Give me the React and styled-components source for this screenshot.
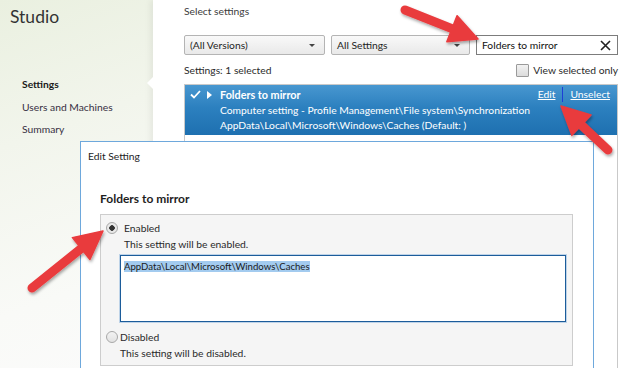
import styled, { createGlobalStyle } from "styled-components";

const GlobalStyle = createGlobalStyle`
  html, body {
    margin: 0;
    padding: 0;
    background: #ffffff;
  }
  body {
    font-family: Lato, "Noto Sans", sans-serif;
    font-size: 10.3px;
    color: #2a2a2a;
  }
`;

const arrows = [
  { from: [405, 10], to: [478, 39] },
  { from: [608, 150], to: [561, 106] },
  { from: [32, 288], to: [103, 231] },
];

function Arrow({ from, to }) {
  const dx = to[0] - from[0];
  const dy = to[1] - from[1];
  const len = Math.hypot(dx, dy);
  const ux = dx / len;
  const uy = dy / len;
  const head = 28;
  const half = 14;
  const bx = to[0] - ux * head;
  const by = to[1] - uy * head;
  const nx = -uy;
  const ny = ux;
  const pts = [
    [to[0], to[1]],
    [bx + nx * half, by + ny * half],
    [bx - nx * half, by - ny * half],
  ]
    .map((p) => p.join(","))
    .join(" ");
  return (
    <g>
      <line
        x1={from[0]}
        y1={from[1]}
        x2={bx + ux * 4}
        y2={by + uy * 4}
        stroke="#e93b3e"
        strokeWidth="9"
        strokeLinecap="round"
      />
      <polygon points={pts} fill="#e93b3e" strokeLinejoin="round" stroke="#e93b3e" strokeWidth="1.5" />
    </g>
  );
}

function App() {
  return (
    <>
      <GlobalStyle />
      <Page>
        <Sidebar>
          <Brand>Studio</Brand>
          <Nav>
            <NavItem $active>Settings</NavItem>
            <NavItem>Users and Machines</NavItem>
            <NavItem>Summary</NavItem>
          </Nav>
        </Sidebar>

        <Main>
          <Heading>Select settings</Heading>
          <FilterRow>
            <Select $w={141}>
              (All Versions)
              <Caret />
            </Select>
            <Select $w={139}>
              All Settings
              <Caret />
            </Select>
            <Search>
              <span>Folders to mirror</span>
              <svg width="11" height="11" viewBox="0 0 11 11">
                <path d="M1 1 L10 10 M10 1 L1 10" stroke="#222" strokeWidth="1.6" />
              </svg>
            </Search>
          </FilterRow>
          <StatusRow>
            <span>Settings: 1 selected</span>
            <CheckLabel>
              <CheckBox />
              View selected only
            </CheckLabel>
          </StatusRow>
          <List>
            <SelectedRow>
              <RowIcons>
                <svg width="11" height="9" viewBox="0 0 11 9">
                  <path d="M1 4.5 L4 7.5 L10 1" stroke="#fff" strokeWidth="1.8" fill="none" />
                </svg>
                <svg width="5" height="8" viewBox="0 0 5 8">
                  <path d="M0 0 L5 4 L0 8 Z" fill="#fff" />
                </svg>
              </RowIcons>
              <RowText>
                <RowHead>
                  <RowTitle>Folders to mirror</RowTitle>
                  <RowActions>
                    <ActionLink>Edit</ActionLink>
                    <Separator />
                    <ActionLink>Unselect</ActionLink>
                  </RowActions>
                </RowHead>
                <div>Computer setting - Profile Management\File system\Synchronization</div>
                <div>AppData\Local\Microsoft\Windows\Caches (Default: )</div>
              </RowText>
            </SelectedRow>
          </List>
        </Main>

        <Dialog>
          <DialogTitle>Edit Setting</DialogTitle>
          <DialogBody>
            <SettingName>Folders to mirror</SettingName>
            <Group>
              <Option>
                <Radio $checked />
                <span>Enabled</span>
              </Option>
              <OptionDesc>This setting will be enabled.</OptionDesc>
              <ValueBox>
                <Selected>AppData\Local\Microsoft\Windows\Caches</Selected>
              </ValueBox>
              <Option $tight $spaced>
                <Radio />
                <span>Disabled</span>
              </Option>
              <OptionDesc $tight>This setting will be disabled.</OptionDesc>
            </Group>
          </DialogBody>
        </Dialog>

        <ArrowLayer viewBox="0 0 622 368">
          <defs>
            <filter id="shadow" x="-20%" y="-20%" width="140%" height="140%">
              <feDropShadow dx="1" dy="2" stdDeviation="1.5" floodColor="#000" floodOpacity="0.35" />
            </filter>
          </defs>
          <g filter="url(#shadow)">
            {arrows.map((a, i) => (
              <Arrow key={i} from={a.from} to={a.to} />
            ))}
          </g>
        </ArrowLayer>
      </Page>
    </>
  );
}

export default App;

const Page = styled.div`
  position: relative;
  width: 622px;
  height: 368px;
  overflow: hidden;
  display: flex;
`;

const Sidebar = styled.div`
  width: 153px;
  flex-shrink: 0;
  padding: 4px 0 0 10px;
  box-sizing: border-box;
  background: linear-gradient(160deg, #eaf0e0 0%, #f2f5ec 35%, #f9faf7 75%, #fbfbfb 100%);
`;

const Brand = styled.div`
  font-size: 17.5px;
  line-height: 26px;
  color: #333;
`;

const Nav = styled.div`
  margin-top: 47px;
  padding-left: 12px;
  display: flex;
  flex-direction: column;
  gap: 8.5px;
`;

const NavItem = styled.div`
  line-height: 14px;
  color: ${(p) => (p.$active ? "#1a1a1a" : "#372f42")};
  font-weight: ${(p) => (p.$active ? 700 : 400)};
`;

const Main = styled.div`
  position: relative;
  flex: 1;
  display: flex;
  flex-direction: column;
  padding: 4px 4px 0 31px;
  background: #fff;
  box-shadow: -3px 0 6px rgba(0, 0, 0, 0.06);

  &::before {
    content: "";
    position: absolute;
    left: -6px;
    top: 77px;
    border-style: solid;
    border-width: 6px 6px 6px 0;
    border-color: transparent #fff transparent transparent;
  }
`;

const Heading = styled.div`
  line-height: 14px;
  color: #3c3c3c;
`;

const FilterRow = styled.div`
  margin-top: 17px;
  display: flex;
  gap: 6px;
  height: 20px;
`;

const Select = styled.div`
  width: ${(p) => p.$w}px;
  box-sizing: border-box;
  display: flex;
  align-items: center;
  justify-content: space-between;
  padding: 0 9px 0 5px;
  border: 1px solid #b4b4b4;
  border-radius: 2px;
  background: linear-gradient(#f9f9f9, #e9e9e9);
  color: #1e1e1e;
`;

const Caret = styled.span`
  width: 0;
  height: 0;
  border-left: 3px solid transparent;
  border-right: 3px solid transparent;
  border-top: 3px solid #444;
`;

const Search = styled.div`
  flex: 1;
  display: flex;
  align-items: center;
  justify-content: space-between;
  padding: 0 6px 0 5px;
  border: 1px solid #7c7c7c;
  background: #fff;
  color: #111;
`;

const StatusRow = styled.div`
  margin-top: 8px;
  display: flex;
  justify-content: space-between;
  align-items: center;
  line-height: 14px;
`;

const CheckLabel = styled.label`
  display: flex;
  align-items: center;
  gap: 4px;
`;

const CheckBox = styled.span`
  width: 11px;
  height: 11px;
  border: 1px solid #9a9a9a;
  border-radius: 1px;
  background: linear-gradient(#f2f2f2, #dcdcdc);
`;

const List = styled.div`
  margin-top: 7px;
  flex: 1;
  border: 1px solid #c9c9c9;
  border-bottom: none;
  background: #fff;
`;

const SelectedRow = styled.div`
  display: flex;
  align-items: flex-start;
  padding: 2px 7px 1px 5px;
  background: linear-gradient(#4897d0, #2c80bf 45%, #1e70b0);
  color: #fff;
  line-height: 15.5px;
`;

const RowIcons = styled.div`
  display: flex;
  align-items: center;
  gap: 6px;
  width: 30px;
  height: 15px;
`;

const RowText = styled.div`
  flex: 1;
  white-space: nowrap;
`;

const RowHead = styled.div`
  display: flex;
  align-items: center;
  justify-content: space-between;
`;

const RowTitle = styled.div`
  font-size: 10.8px;
  font-weight: 700;
`;

const RowActions = styled.div`
  display: flex;
  align-items: center;
  gap: 7px;
`;

const ActionLink = styled.a`
  color: #fff;
  text-decoration: underline;
`;

const Separator = styled.span`
  width: 1px;
  height: 15px;
  background: #1d3fd6;
`;

const Dialog = styled.div`
  position: absolute;
  left: 80px;
  top: 141px;
  width: 514px;
  height: 260px;
  box-sizing: border-box;
  border: 1px solid #6ea8dc;
  background: #fff;
`;

const DialogTitle = styled.div`
  padding: 7px 7px 0;
  line-height: 14px;
  color: #1e1e1e;
`;

const DialogBody = styled.div`
  padding: 28px 20px 0 19px;
`;

const SettingName = styled.div`
  font-size: 12px;
  font-weight: 700;
  line-height: 16px;
  color: #1e1e1e;
`;

const Group = styled.div`
  margin-top: 7px;
  padding: 5px 3px 3px 5px;
  border: 1px solid #cdcdcd;
  background: #f5f5f5;
`;

const Option = styled.div`
  display: flex;
  align-items: center;
  gap: ${(p) => (p.$tight ? 2 : 6)}px;
  line-height: 16px;
  margin-top: ${(p) => (p.$spaced ? 7 : 0)}px;
`;

const Radio = styled.span`
  width: 12px;
  height: 12px;
  box-sizing: border-box;
  border-radius: 50%;
  border: 1px solid #a8a8a8;
  background: ${(p) =>
    p.$checked
      ? "radial-gradient(circle, #333 0 2.5px, #e9e9e9 3px)"
      : "linear-gradient(#f3f3f3, #e2e2e2)"};
`;

const OptionDesc = styled.div`
  padding-left: ${(p) => (p.$tight ? 14 : 18)}px;
  line-height: 17px;
`;

const ValueBox = styled.div`
  margin: 2px 3px 0 14px;
  height: 67px;
  box-sizing: border-box;
  padding: 3px 3px;
  font-size: 9.6px;
  line-height: 16px;
  border: 1px solid #1c5c9a;
  box-shadow: 0 0 0 1px rgba(90, 150, 210, 0.35);
  background: #fff;
  color: #1a1a1a;
`;

const Selected = styled.span`
  background: #a3cbef;
`;

const ArrowLayer = styled.svg`
  position: absolute;
  left: 0;
  top: 0;
  width: 622px;
  height: 368px;
  pointer-events: none;
`;
